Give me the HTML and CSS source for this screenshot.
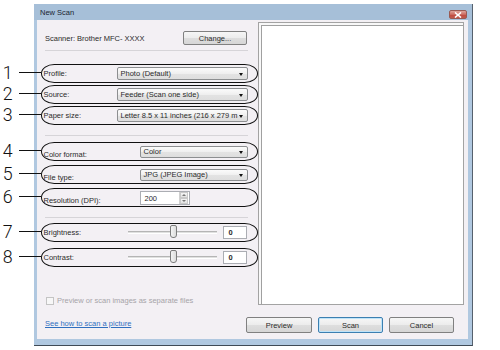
FILE: index.html
```html
<!DOCTYPE html>
<html>
<head>
<meta charset="utf-8">
<link rel="stylesheet" href="styles.css">
</head>
<body>
<div class="window">
  <div class="titlebar">
    <span class="title">New Scan</span>
    <span class="close"><svg width="8" height="6" viewBox="0 0 8 6"><path d="M1 0.5 L7 5.5 M7 0.5 L1 5.5" stroke="#fff" stroke-width="1.6"/></svg></span>
  </div>
  <div class="client">
    <div class="left">
      <div class="scanner">
        <span>Scanner: Brother MFC- XXXX</span>
        <button class="btn change">Change...</button>
      </div>
      <div class="sep"></div>
      <div class="opt first"><span class="num">1</span><span class="lbl lbl-a">Profile:</span><div class="combo combo-a">Photo (Default)<i class="arrow"></i></div></div>
      <div class="opt"><span class="num">2</span><span class="lbl lbl-a">Source:</span><div class="combo combo-a">Feeder (Scan one side)<i class="arrow"></i></div></div>
      <div class="opt"><span class="num">3</span><span class="lbl lbl-a">Paper size:</span><div class="combo combo-a">Letter 8.5 x 11 inches (216 x 279 m<i class="arrow"></i></div></div>
      <div class="sep sep2"></div>
      <div class="opt g2 first2"><span class="num">4</span><span class="lbl lbl-b low">Color format:</span><div class="combo combo-b">Color<i class="arrow"></i></div></div>
      <div class="opt g2"><span class="num">5</span><span class="lbl lbl-b low">File type:</span><div class="combo combo-b">JPG (JPEG Image)<i class="arrow"></i></div></div>
      <div class="opt g2"><span class="num">6</span><span class="lbl lbl-b low">Resolution (DPI):</span><div class="spin"><span class="spin-val">200</span><span class="spin-btns"><i class="up"></i><i class="down"></i></span></div></div>
      <div class="sep sep3"></div>
      <div class="opt g3 first3"><span class="num">7</span><span class="lbl lbl-c">Brightness:</span><div class="slider"><span class="thumb"></span></div><div class="val">0</div></div>
      <div class="opt g3"><span class="num">8</span><span class="lbl lbl-c">Contrast:</span><div class="slider"><span class="thumb"></span></div><div class="val">0</div></div>
      <label class="check"><span class="box"></span>Preview or scan images as separate files</label>
    </div>
    <div class="preview"><div class="preview-inner"></div></div>
    <div class="bottom">
      <a class="link" href="#">See how to scan a picture</a>
      <div class="buttons">
        <button class="btn b-prev">Preview</button>
        <button class="btn b-scan">Scan</button>
        <button class="btn b-cancel">Cancel</button>
      </div>
    </div>
  </div>
</div>
</body>
</html>
```
FILE: styles.css
```css
* { box-sizing: border-box; }
html, body { margin: 0; padding: 0; background: #fff; }
body {
  width: 500px; height: 350px; overflow: hidden;
  font-family: "Liberation Sans", Arial, sans-serif;
  font-size: 7.5px; color: #2a2a2a;
}
.window {
  margin: 4px 0 0 34px;
  width: 439px; height: 342px;
  background: #b0c8e0;
  border-right: 1px solid #56616d;
  border-bottom: 1px solid #3f4a55;
  padding: 0 4px 6px 3px;
  display: flex; flex-direction: column;
}
.titlebar {
  height: 16px; flex: none;
  display: flex; align-items: center;
  background: #a6bfd8;
  margin: 0 -4px 0 -3px; padding: 0 5px 0 6px;
}
.title { color: #1a2430; font-size: 7.5px; margin-top: 1px; }
.close {
  margin-left: auto; align-self: flex-end; margin-bottom: 1px;
  width: 18px; height: 9px; border-radius: 2px;
  background: linear-gradient(#e0a69c, #cc6a5e 50%, #bf4a3e 51%, #c25a4c);
  border: 1px solid #9a5a52;
  display: flex; align-items: center; justify-content: center;
}
.close svg { display: block; }
.client {
  flex: 1;
  background: #f3f0f4;
  display: grid;
  grid-template-columns: 221px 206px;
  grid-template-rows: 286px 1fr;
}
.left { padding: 11px 0 0 4px; }
.scanner {
  height: 14px; display: flex; align-items: center; justify-content: space-between;
  padding: 0 11px 0 4px;
}
.btn {
  font-family: inherit; font-size: 7.5px; color: #2a2a2a;
  background: linear-gradient(#f6f6f6, #ececec 50%, #dedede 51%, #d6d6d6);
  border: 1px solid #808080; border-radius: 2px;
  padding: 0; margin: 0;
}
.change { width: 64px; height: 14px; }
.sep { height: 1px; background: #d6d4d8; margin: 5px 10px 0 4px; }
.sep2 { margin-top: 10px; }
.sep3 { margin-top: 10px; }
.opt {
  position: relative;
  width: 217px; height: 19px;
  border: 1.5px solid #111; border-radius: 14px / 10px;
  display: flex; align-items: center;
  padding-left: 1.5px;
  margin-top: 2px;
}
.opt.first { margin-top: 13px; }
.opt.g2 { margin-top: 4px; }
.opt.first2 { margin-top: 6px; }
.opt.g3 { margin-top: 6px; }
.opt.first3 { margin-top: 5px; }
.opt::before {
  content: ""; position: absolute;
  left: -23px; width: 22px; top: 7px; height: 1.2px; background: #111;
}
.num {
  position: absolute; left: -42.5px; top: 0;
  width: 13px; text-align: right;
  font-family: Roboto, "Liberation Sans", sans-serif; font-weight: 300;
  font-size: 17.8px; line-height: 16px; color: #111;
}
.lbl { flex: none; }
.lbl-a { width: 73px; }
.lbl-b { width: 96px; }
.lbl-c { width: 84px; }
.low { align-self: flex-end; padding-bottom: 1px; }
.combo {
  position: relative; height: 13px;
  border: 1px solid #8c8e90; border-radius: 2px;
  background: linear-gradient(#fbfbfb, #efefef 50%, #e3e3e3 51%, #dedede);
  padding-left: 3px; line-height: 11px; white-space: nowrap; overflow: hidden;
}
.combo-a { width: 131px; }
.combo-b { width: 108px; height: 12px; line-height: 10px; }
.arrow {
  position: absolute; right: 4px; top: 50%; margin-top: -1px;
  width: 0; height: 0;
  border-left: 2.5px solid transparent; border-right: 2.5px solid transparent;
  border-top: 3px solid #111;
}
.spin {
  width: 50px; height: 14px;
  border: 1px solid #abadb3; background: #fff;
  display: flex; align-items: center; margin-top: 1px;
}
.spin-val { padding-left: 4px; flex: 1; }
.spin-btns {
  width: 9px; height: 12px; display: flex; flex-direction: column;
  border-left: 1px solid #d0d0d0; margin-right: 1px;
}
.spin-btns i { flex: 1; position: relative; background: linear-gradient(#f4f4f4, #e2e2e2); border: 1px solid #c9c9c9; }
.spin-btns i::after {
  content: ""; position: absolute; left: 1.5px; top: 1px;
  border-left: 2px solid transparent; border-right: 2px solid transparent;
}
.spin-btns .up::after { border-bottom: 2px solid #777; }
.spin-btns .down::after { border-top: 2px solid #777; }
.slider {
  position: relative; width: 89px; height: 3px;
  border-top: 1px solid #b5b5b5; border-bottom: 1px solid #fff;
  background: #e0e0e0;
}
.thumb {
  position: absolute; left: 42px; top: -7px;
  width: 7px; height: 13px;
  border: 1px solid #7d7d7d; border-radius: 2px 2px 3px 3px;
  background: linear-gradient(90deg, #f4f4f4, #dcdcdc);
}
.val {
  margin-left: 6px; width: 24px; height: 13px;
  border: 1px solid #abadb3; background: #fff;
  padding-left: 5px; line-height: 11px; font-weight: bold;
}
.check {
  display: flex; align-items: center; gap: 3px;
  margin: 29px 0 0 5px; color: #a6a4a8;
}
.box { width: 8px; height: 8px; border: 1px solid #c4c4c4; background: #f7f7f7; }
.preview {
  margin-top: 2px; height: 283px;
  border: 1px solid #a3a3a3; background: #f8f8f8;
  padding: 2px 0 0 2px;
}
.preview-inner { height: 100%; border-top: 1px solid #a0a0a0; border-left: 1px solid #a0a0a0; background: #fff; }
.bottom {
  grid-column: 1 / -1;
  display: flex; align-items: flex-start; justify-content: space-between;
  padding: 11px 10px 0 8px;
}
.link { color: #2f6fbf; text-decoration: underline; margin-top: 2px; }
.buttons { display: flex; gap: 6px; }
.buttons .btn { height: 16px; width: 65px; }
.buttons .b-prev { width: 66px; }
.b-scan { border-color: #3c7fb1; box-shadow: inset 0 0 0 1px #bfe3f9; }
```
